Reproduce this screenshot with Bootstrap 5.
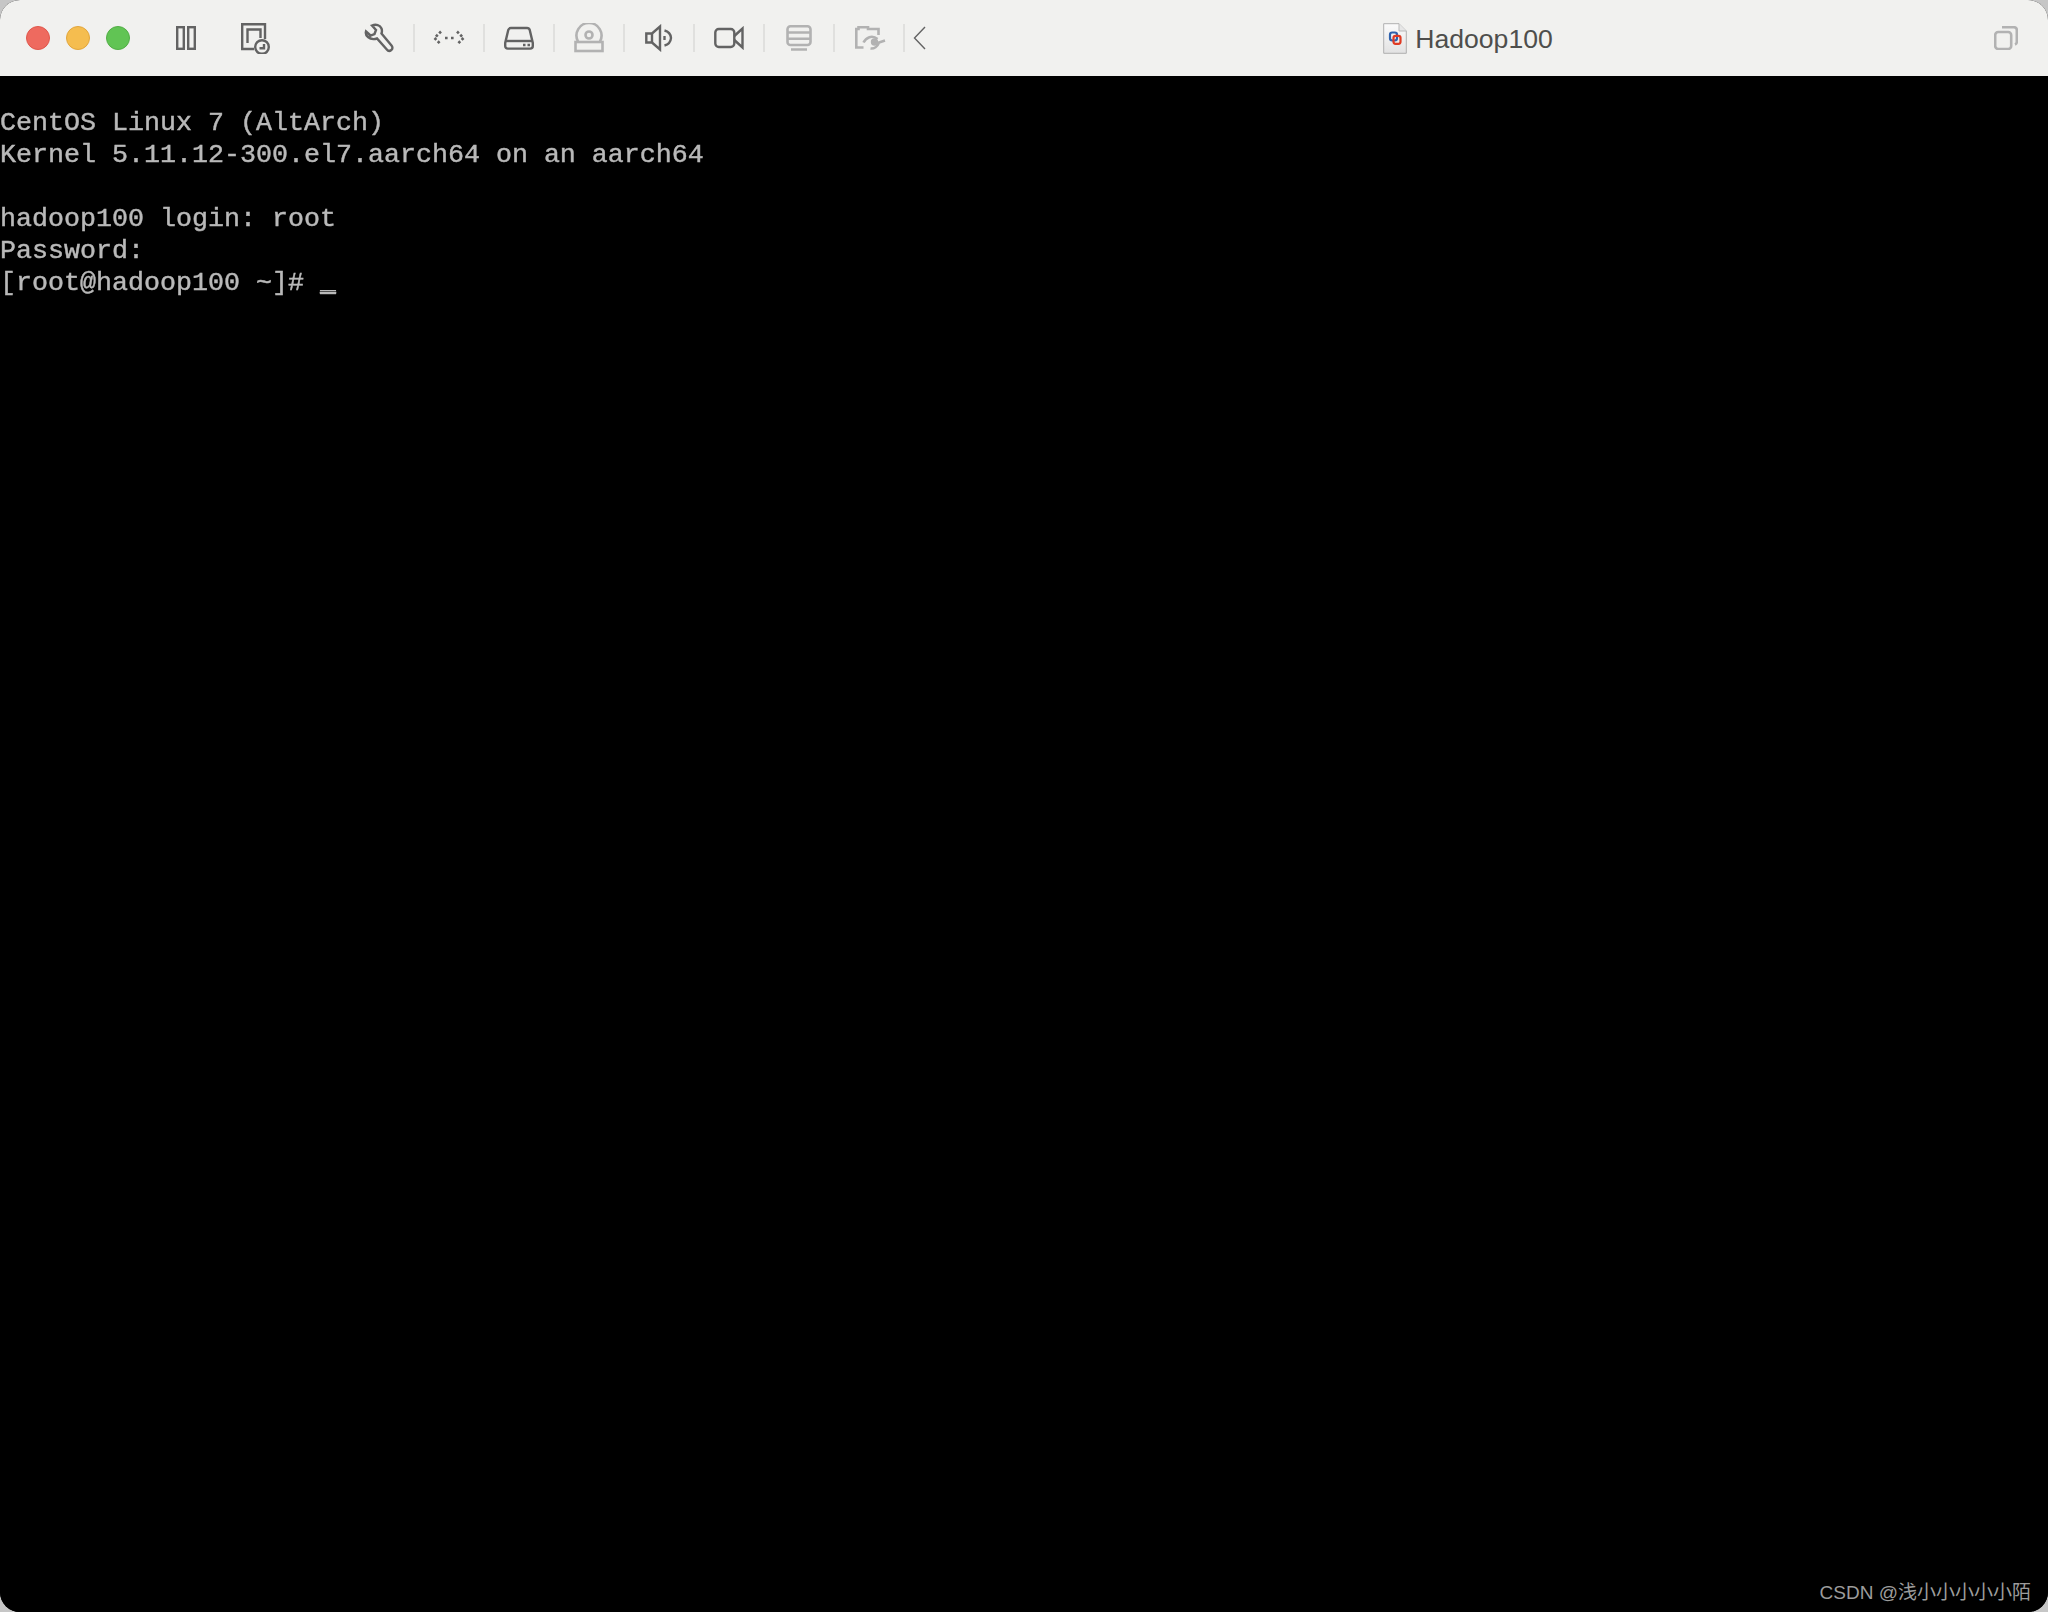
<!DOCTYPE html>
<html lang="en">
<head>
<meta charset="utf-8">
<title>Hadoop100</title>
<link rel="stylesheet" href="https://cdn.jsdelivr.net/npm/bootstrap@5.3.0/dist/css/bootstrap.min.css">
<style>
html,body{height:100%;margin:0;background:#c6c6c6;overflow:hidden}
.vm-window{width:2048px;height:1612px;border-radius:20px;overflow:hidden;background:#000;position:relative}
.vm-bar{height:76px;background:#f1f1ef;flex:none}
.lights{padding-left:26px;gap:16px;width:151px;flex:none}
.light{width:24px;height:24px;border-radius:50%;display:block}
.l-red{background:#ee6a5f;border:1px solid #e0574c}
.l-yel{background:#f5bd4f;border:1px solid #e2a63c}
.l-grn{background:#61c454;border:1px solid #52ae46}
.tool{width:70px;height:28px;flex:none}
.tool-sep{border-right:2px solid #e0e0de}
.gap-54{width:54px;flex:none}
.ico{display:block;fill:none;stroke:#636363;stroke-width:2.4}
.ico-off{stroke:#b2b2b2;stroke-width:2.6}
.title-zone{flex:1 1 auto;gap:8px;padding-left:16px}
.vm-name{font-family:"Liberation Sans",Arial,sans-serif;font-size:26.6px;line-height:32px;color:#4e4e4c;padding-top:1px}
.copy-zone{width:54px;flex:none}
.console{margin:0;padding:31px 0 0;font-family:"Liberation Mono",monospace;font-weight:400;-webkit-text-stroke:.45px #b9b9b9;font-size:26.67px;line-height:32px;color:#b9b9b9;background:#000;flex:1 1 auto;filter:blur(.6px);overflow:hidden}
.cursor-bar{text-shadow:0 -2px 0 #b9b9b9,0 1px 0 #b9b9b9}
.mark-wm{position:absolute;right:17px;bottom:7px;font-family:"Liberation Sans","Noto Sans CJK SC",sans-serif;font-size:19px;line-height:24px;color:#9c9c9c}
</style>
</head>
<body>
<div class="vm-window d-flex flex-column">
  <div class="vm-bar d-flex align-items-center">
    <div class="lights d-flex align-items-center">
      <span class="light l-red"></span><span class="light l-yel"></span><span class="light l-grn"></span>
    </div>
    <div class="tool d-flex justify-content-center align-items-center">
      <svg class="ico" width="20" height="24" viewBox="0 0 20 24"><rect x="1.2" y="1.2" width="6.6" height="21.6"/><rect x="12.2" y="1.2" width="6.6" height="21.6"/></svg>
    </div>
    <div class="tool d-flex justify-content-center align-items-center">
      <svg class="ico" width="30" height="31" viewBox="0 0 30 31"><path d="M13 26H1.200V1.200H24V16"/><path d="M6.500 20V6.500H19.500V15"/><circle cx="21" cy="24" r="6.800" fill="#f1f1ef"/><path d="M18.500 25.200H23V21"/></svg>
    </div>
    <div class="gap-54"></div>
    <div class="tool tool-sep d-flex justify-content-center align-items-center">
      <svg class="ico" width="30" height="30" viewBox="0 0 30 30"><path d="M2 8.500 6.500 12.500 10.500 11 12 7 8 2.500C12 1 16 2 17.500 5.500c.7 1.800.5 3.500 0 5L27.500 22.500c1.300 1.600 1.200 3.500-.2 4.500-1.500 1.200-3.300 1-4.500-.5L13 15.500c-3 1-6.500.8-9-1.500C2 12.500 1.500 10.500 2 8.500Z"/></svg>
    </div>
    <div class="tool tool-sep d-flex justify-content-center align-items-center">
      <svg class="ico" width="32" height="16" viewBox="0 0 32 16" style="stroke-width:2.600;stroke-dasharray:2.600 2"><path d="M8 1.500 1.500 8 8 14.500"/><path d="M24 1.500 30.500 8 24 14.500"/><path d="M12 8h2.600M18 8h2.600"/></svg>
    </div>
    <div class="tool tool-sep d-flex justify-content-center align-items-center">
      <svg class="ico" width="30" height="24" viewBox="0 0 30 24"><path d="M7 2h16c1.500 0 2.400.8 2.800 2.200L28.800 17v3c0 1.600-1 2.600-2.600 2.600H3.800c-1.600 0-2.600-1-2.600-2.600v-3L4.200 4.200C4.600 2.800 5.500 2 7 2Z"/><path d="M1.500 15h27"/><path d="M19 19h2.500M23.500 19H26"/></svg>
    </div>
    <div class="tool tool-sep d-flex justify-content-center align-items-center">
      <svg class="ico ico-off" width="30" height="30" viewBox="0 0 30 30"><path d="M4 18.500A12.500 12.500 0 1 1 26 18.500"/><circle cx="15" cy="12" r="3.500"/><rect x="1.500" y="19" width="27" height="9"/></svg>
    </div>
    <div class="tool tool-sep d-flex justify-content-center align-items-center">
      <svg class="ico" width="28" height="28" viewBox="0 0 28 28"><path d="M1.300 9.500H7L15 2.500v23L7 18.500H1.300Z"/><path d="M7 9.500v9"/><path d="M19.500 6.500a8.500 8.500 0 0 1 6.500 7.500 8.500 8.500 0 0 1-6.500 7.500"/><path d="M19.500 12v4"/></svg>
    </div>
    <div class="tool tool-sep d-flex justify-content-center align-items-center">
      <svg class="ico" width="30" height="24" viewBox="0 0 30 24"><rect x="1.300" y="3" width="19" height="18" rx="3.500"/><path d="M20.300 10 28.500 2.500v19L20.300 14"/></svg>
    </div>
    <div class="tool tool-sep d-flex justify-content-center align-items-center">
      <svg class="ico ico-off" width="26" height="26" viewBox="0 0 26 26"><rect x="1.500" y="1.300" width="23" height="18.700" rx="3"/><path d="M1.500 7.500h23M1.500 13.800h23M5 24.500h16"/></svg>
    </div>
    <div class="tool tool-sep d-flex justify-content-center align-items-center">
      <svg class="ico ico-off ms-1" width="32" height="24" viewBox="0 0 32 24"><path d="M8.500 21.500H1.300V3H3.500V1.300H13V3H23.500V9"/><circle cx="19.500" cy="16" r="2.400" fill="#b2b2b2"/><path d="M8.500 16.500C11 11.500 17 8.500 22.500 13"/><path d="M15.500 22.500C19 23 22.500 20.500 24 16.500L30 14.500"/></svg>
    </div>
    <div class="d-flex align-items-center ms-2">
      <svg class="ico" width="13" height="24" viewBox="0 0 13 24" style="stroke-width:1.400"><path d="M12 1 1.500 12 12 23"/></svg>
    </div>
    <div class="title-zone d-flex justify-content-center align-items-center">
      <svg width="24" height="31" viewBox="0 0 24 31"><defs><linearGradient id="docfill" x1="0" y1="0" x2="0" y2="1"><stop offset="0" stop-color="#fbfbfb"/><stop offset="1" stop-color="#e2e2e2"/></linearGradient></defs><path d="M.7.700H16L23.300 8V30.300H.7Z" fill="url(#docfill)" stroke="#b0b0b0"/><path d="M16 .7V8H23.300" fill="#e6e6e6" stroke="#b9b9b9"/><rect x="7" y="9.500" width="7" height="8" rx="2.200" fill="none" stroke="#2f62ad" stroke-width="2.200"/><rect x="10.500" y="12.800" width="7" height="8" rx="2" fill="none" stroke="#df3a22" stroke-width="2.200"/></svg>
      <span class="vm-name">Hadoop100</span>
    </div>
    <div class="copy-zone d-flex align-items-center">
      <svg class="ico ico-off" width="24" height="24" viewBox="0 0 24 24"><rect x="1.200" y="6" width="16" height="17" rx="3"/><path d="M8 1.200H20c1.600 0 2.800 1.200 2.800 2.800V16c0 1.200-.6 2-1.800 2.500"/></svg>
    </div>
  </div>
  <pre class="console">CentOS Linux 7 (AltArch)
Kernel 5.11.12-300.el7.aarch64 on an aarch64

hadoop100 login: root
Password:
[root@hadoop100 ~]# <span class="cursor-bar">_</span></pre>
  <div class="mark-wm">CSDN @浅小小小小小陌</div>
</div>
<script src="https://cdn.jsdelivr.net/npm/bootstrap@5.3.0/dist/js/bootstrap.bundle.min.js"></script>
</body>
</html>
